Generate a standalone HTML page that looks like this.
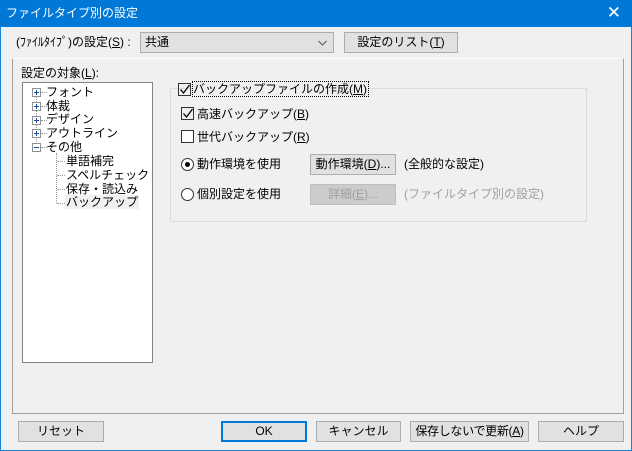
<!DOCTYPE html>
<html><head><meta charset="utf-8"><style>
*{box-sizing:border-box;margin:0;padding:0}
body{width:632px;height:451px;background:#f0f0f0;font-family:"Liberation Sans","Noto Sans CJK JP",sans-serif;font-size:12px;color:#000;position:relative;overflow:hidden}
.win{position:absolute;left:0;top:0;width:632px;height:451px;border:1px solid #1883d7}
.title{position:absolute;left:0;top:0;width:632px;height:27px;background:#0078d7;color:#fff;font-size:12px;line-height:27px;padding-left:6px}
.close{position:absolute;right:11px;top:3px;color:#fff;font-size:17px}
.a{position:absolute;white-space:nowrap;line-height:14px}
.btn{position:absolute;background:#e1e1e1;border:1px solid #adadad;text-align:center;line-height:18px;white-space:nowrap}
.cb{position:absolute;width:13px;height:13px;border:1px solid #333;background:#fff}
.rb{position:absolute;width:13px;height:13px;border:1px solid #333;border-radius:50%;background:#fff}
.pb{position:absolute;width:9px;height:9px;border:1px solid #919191;background:#fff}
.pb:before{content:"";position:absolute;left:1px;top:3px;width:5px;height:1px;background:#1a4fa0}
.pl:after{content:"";position:absolute;left:3px;top:1px;width:1px;height:5px;background:#1a4fa0}
.dim{color:#a0a0a0}
.dh{position:absolute;width:6px;border-top:1px dotted #999}
</style></head><body>
<div class="win"></div>
<div class="title">ファイルタイプ別の設定</div>
<div class="close">✕</div>
<div class="a" style="left:16px;top:35px">(ﾌｧｲﾙﾀｲﾌﾟ)の設定(<u>S</u>) :</div>
<div class="btn" style="left:140px;top:32px;width:194px;height:21px;text-align:left;padding-left:4px">共通<svg style="position:absolute;right:6px;top:7px" width="9" height="6"><path d="M0.5 1L4.5 5L8.5 1" fill="none" stroke="#555"/></svg></div>
<div class="btn" style="left:344px;top:32px;width:114px;height:21px">設定のリスト(<u>T</u>)</div>
<div style="position:absolute;left:12px;top:58px;width:612px;height:356px;border:1px solid #fff;border-right-color:#a0a0a0;border-bottom-color:#a0a0a0;border-left-color:#a0a0a0"></div>
<div class="a" style="left:21px;top:66px">設定の対象(<u>L</u>):</div>
<div style="position:absolute;left:22px;top:82px;width:131px;height:281px;background:#fff;border:1px solid #828282"></div>
<div style="position:absolute;left:36px;top:92px;height:52px;border-left:1px dotted #999"></div>
<div class="pb pl" style="left:32px;top:88px"></div><div class="dh" style="left:41px;top:92px"></div><div class="a" style="left:46px;top:85px">フォント</div>
<div class="pb pl" style="left:32px;top:102px"></div><div class="dh" style="left:41px;top:106px"></div><div class="a" style="left:46px;top:99px">体裁</div>
<div class="pb pl" style="left:32px;top:116px"></div><div class="dh" style="left:41px;top:120px"></div><div class="a" style="left:46px;top:112px">デザイン</div>
<div class="pb pl" style="left:32px;top:129px"></div><div class="dh" style="left:41px;top:133px"></div><div class="a" style="left:46px;top:126px">アウトライン</div>
<div class="pb" style="left:32px;top:143px"></div><div class="dh" style="left:41px;top:147px"></div><div class="a" style="left:46px;top:140px">その他</div>
<div style="position:absolute;left:56px;top:153px;height:50px;border-left:1px dotted #999"></div>
<div class="dh" style="left:57px;top:161px;width:8px"></div><div class="a" style="left:66px;top:154px">単語補完</div>
<div class="dh" style="left:57px;top:175px;width:8px"></div><div class="a" style="left:66px;top:168px">スペルチェック</div>
<div class="dh" style="left:57px;top:189px;width:8px"></div><div class="a" style="left:66px;top:182px">保存・読込み</div>
<div class="dh" style="left:57px;top:203px;width:8px"></div><div class="a" style="left:65px;top:195px;background:#f0f0f0;padding:0 1px">バックアップ</div>
<div style="position:absolute;left:170px;top:88px;width:417px;height:134px;border:1px solid #dcdcdc"></div>
<svg style="position:absolute;left:0;top:0" width="632" height="451">
<path d="M180.5 89.5L183.5 93L189.5 85" fill="none" stroke="#000" stroke-width="1.3"/>
<path d="M183.5 113.5L186.5 117L192.5 109" fill="none" stroke="#000" stroke-width="1.3"/>
</svg>
<div class="cb" style="left:178px;top:83px;background:transparent"></div>
<div class="a" style="left:193px;top:82px;background:#f0f0f0;outline:1px dotted #000;padding-right:1px">バックアップファイルの作成(<u>M</u>)</div>
<div class="cb" style="left:181px;top:107px;background:transparent"></div>
<div class="a" style="left:197px;top:107px">高速バックアップ(<u>B</u>)</div>
<div class="cb" style="left:181px;top:130px"></div>
<div class="a" style="left:197px;top:130px">世代バックアップ(<u>R</u>)</div>
<div class="rb" style="left:181px;top:158px"></div><div style="position:absolute;left:185px;top:162px;width:5px;height:5px;border-radius:50%;background:#000"></div>
<div class="a" style="left:197px;top:157px">動作環境を使用</div>
<div class="rb" style="left:181px;top:188px"></div>
<div class="a" style="left:197px;top:187px">個別設定を使用</div>
<div class="btn" style="left:310px;top:154px;width:86px;height:21px">動作環境(<u>D</u>)...</div>
<div class="a" style="left:404px;top:157px">(全般的な設定)</div>
<div class="btn dim" style="left:310px;top:184px;width:86px;height:21px;background:#cccccc;border-color:#bfbfbf">詳細(<u>E</u>)...</div>
<div class="a dim" style="left:404px;top:187px">(ファイルタイプ別の設定)</div>
<div class="btn" style="left:18px;top:421px;width:86px;height:21px">リセット</div>
<div class="btn" style="left:221px;top:421px;width:86px;height:21px;border:2px solid #0078d7;line-height:17px">OK</div>
<div class="btn" style="left:316px;top:421px;width:85px;height:21px">キャンセル</div>
<div class="btn" style="left:410px;top:421px;width:119px;height:21px;letter-spacing:-0.3px">保存しないで更新(<u>A</u>)</div>
<div class="btn" style="left:538px;top:421px;width:86px;height:21px">ヘルプ</div>
</body></html>
